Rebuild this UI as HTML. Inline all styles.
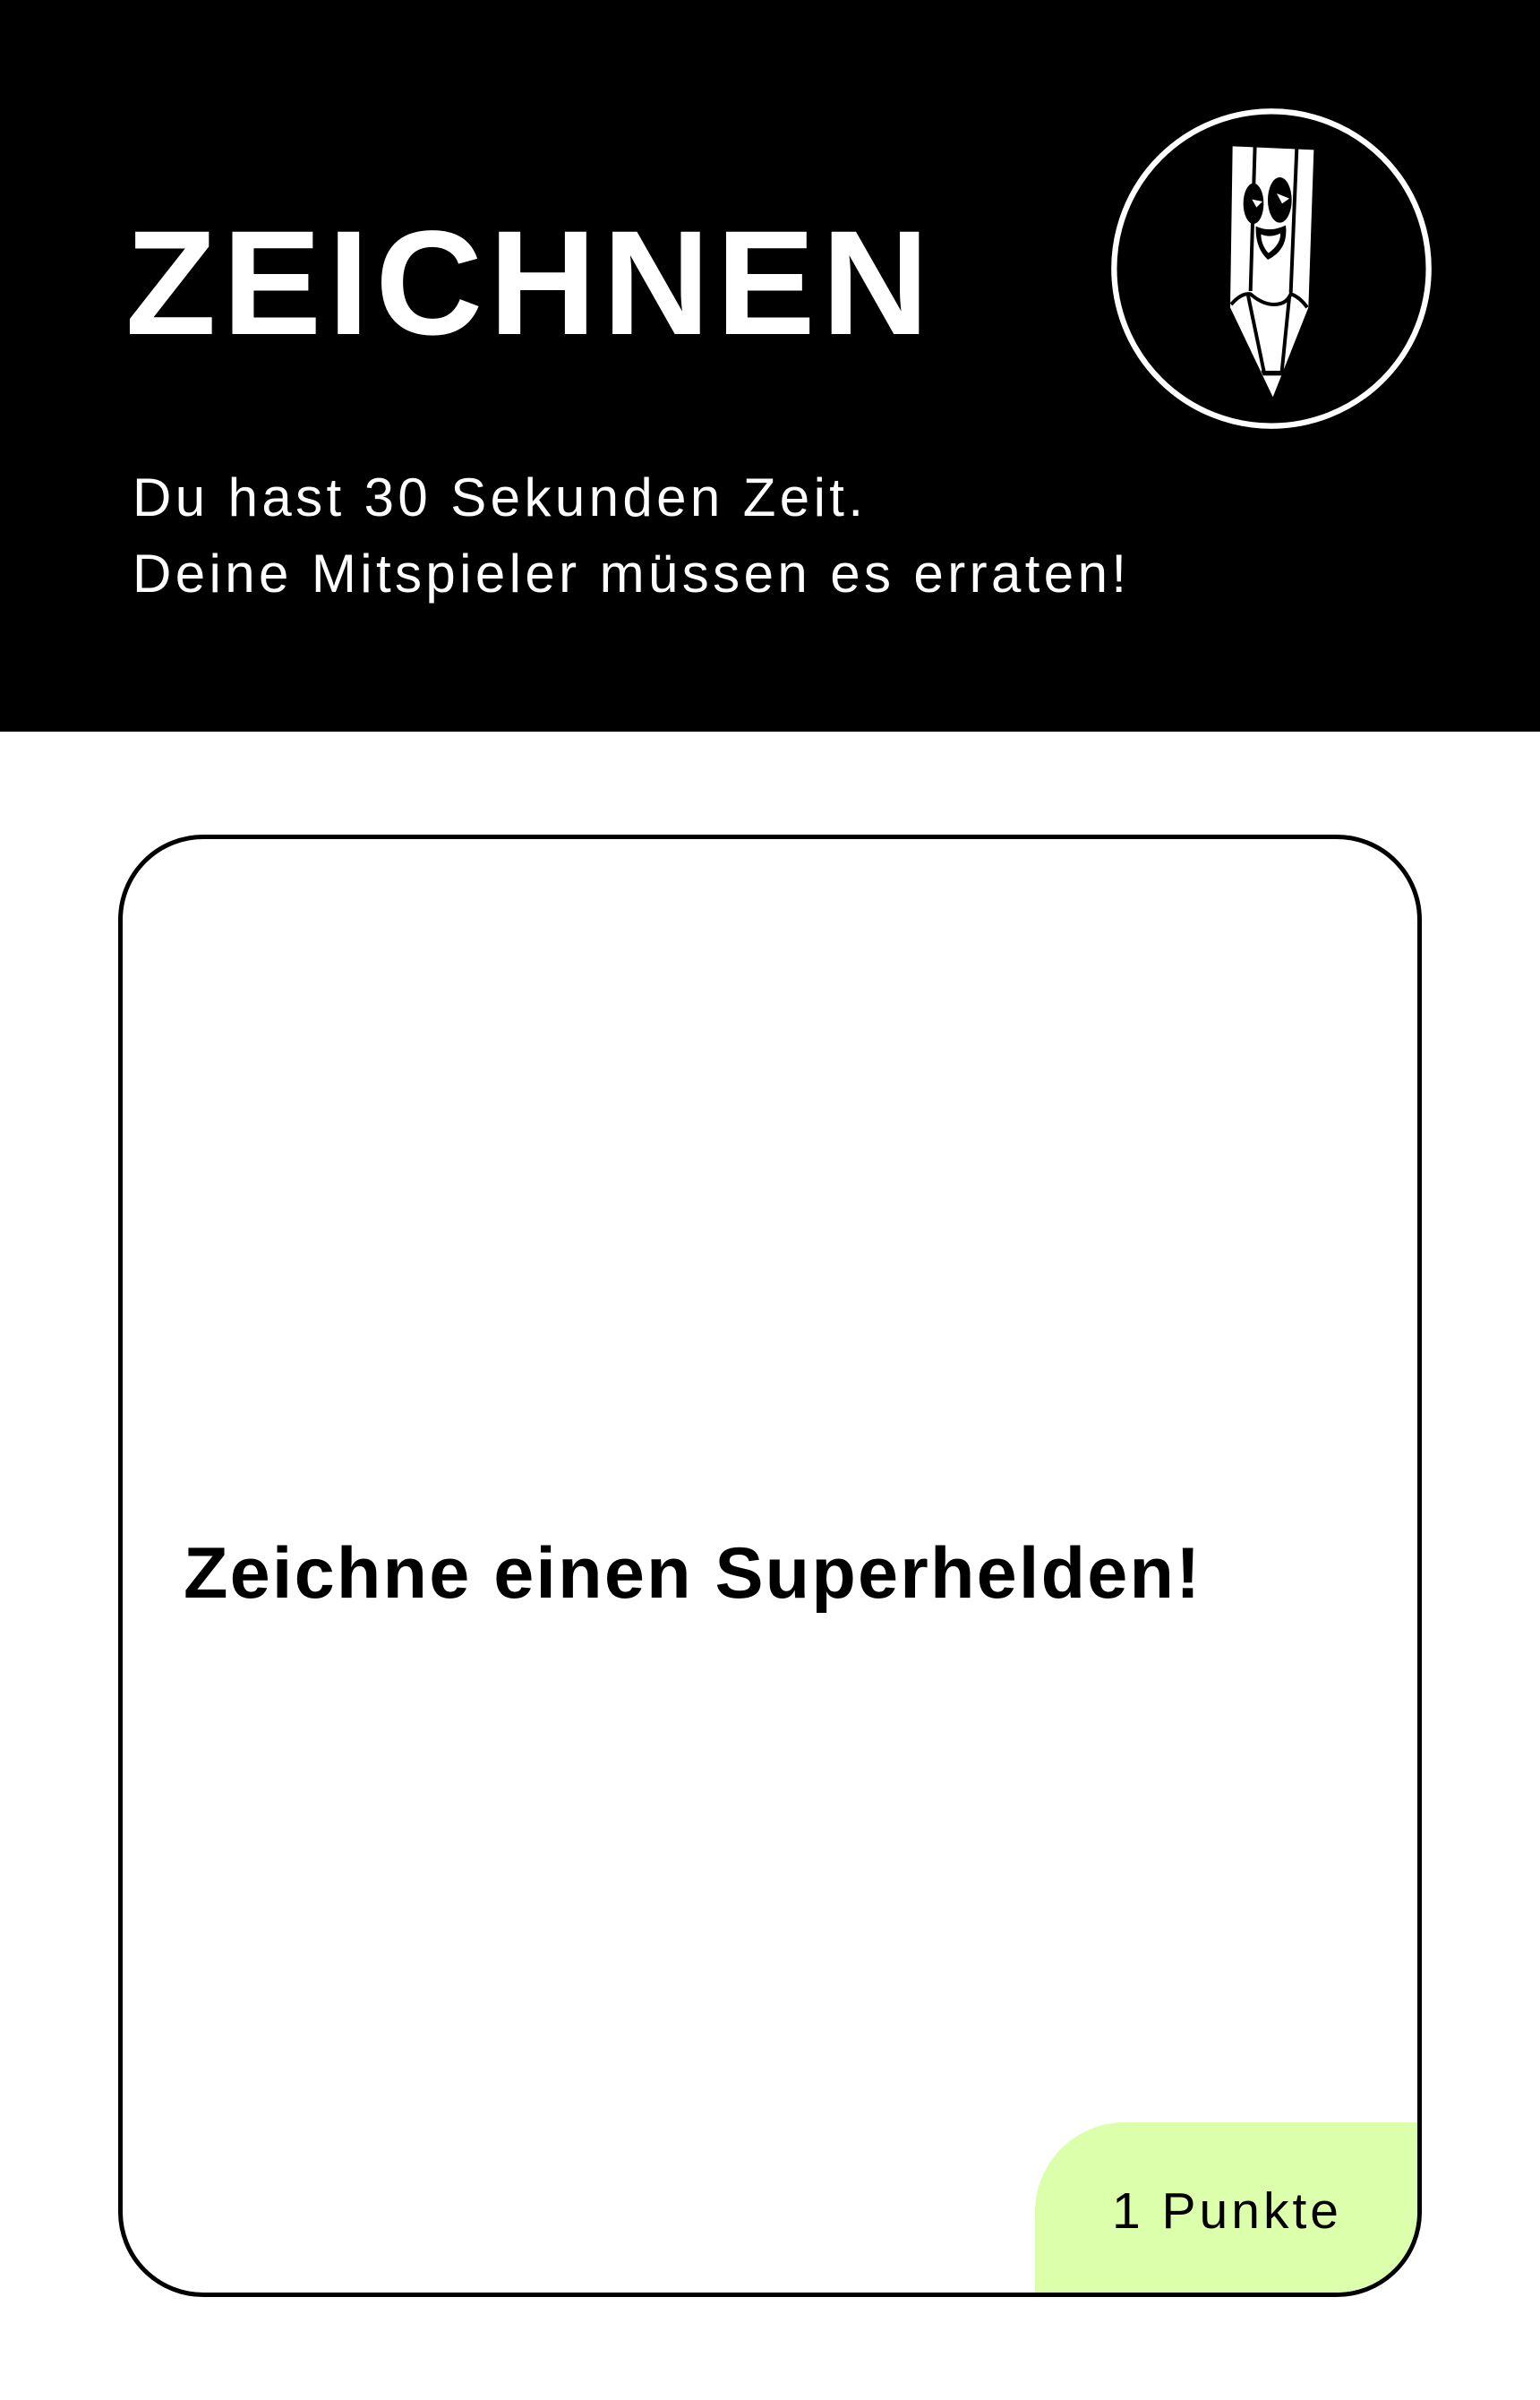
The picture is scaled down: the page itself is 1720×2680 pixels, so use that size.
<!DOCTYPE html>
<html><head><meta charset="utf-8"><style>
html,body{margin:0;padding:0;width:1720px;height:2680px;background:#fff;overflow:hidden;font-family:"Liberation Sans","DejaVu Sans",sans-serif;}
.hdr{position:absolute;left:0;top:0;width:1720px;height:817px;background:#000;}
.title{position:absolute;left:140px;top:234px;font-size:166px;font-weight:bold;color:#fff;letter-spacing:7px;line-height:1;white-space:nowrap;}
.sub{position:absolute;left:148px;top:513px;font-size:60px;line-height:85px;color:#fff;white-space:nowrap;letter-spacing:4.4px;}
.card{position:absolute;left:132px;top:932px;width:1446px;height:1623px;border:5px solid #000;border-radius:95px;overflow:hidden;background:#fff;}
.main{position:absolute;left:205px;top:1717px;font-size:81px;font-weight:bold;color:#000;line-height:1;white-space:nowrap;letter-spacing:2.2px;}
.badge{position:absolute;left:1019px;top:1433px;width:440px;height:200px;background:#dbffaa;border-top-left-radius:100px;}
.pts{position:absolute;left:1242px;top:2441px;font-size:57px;color:#000;line-height:1;white-space:nowrap;letter-spacing:4px;}
svg{position:absolute;}
</style></head><body>
<div class="hdr"></div>
<div class="title">ZEICHNEN</div>
<div class="sub">Du hast 30 Sekunden Zeit.<br>Deine Mitspieler müssen es erraten!</div>
<svg style="left:1230px;top:110px" width="380" height="380" viewBox="0 0 1140 1140">
<circle cx="570" cy="570" r="527" fill="none" stroke="#fff" stroke-width="19"/>
<path d="M440 160 L712 172 L694 700 L575 1000 L432 700 Z" fill="#fff"/>
<path d="M515 155 L500 645 M655 165 L635 650" stroke="#000" stroke-width="12" fill="none"/>
<path d="M435 690 Q470 650 500 655 Q540 690 580 690 Q620 690 635 655 Q665 665 690 700" stroke="#000" stroke-width="12" fill="none"/>
<path d="M492 660 L545 915 M630 665 L605 915" stroke="#000" stroke-width="12" fill="none"/>
<path d="M535 912 L612 912 L605 928 L542 928 Z" fill="#000"/>
<ellipse cx="510" cy="352" rx="34" ry="68" fill="#000"/>
<path d="M505 338 L540 345 L520 365 Z" fill="#fff"/>
<ellipse cx="598" cy="340" rx="40" ry="76" fill="#000"/>
<path d="M588 318 L630 335 L606 352 Z" fill="#fff"/>
<path d="M518 428 Q565 450 618 425 Q628 505 558 540 Q515 500 518 428 Z" fill="#000"/>
<path d="M535 455 Q567 468 600 452 Q602 488 560 518 Q536 492 535 455 Z" fill="#fff"/>
</svg>
<div class="card"><div class="badge"></div></div>
<div class="main">Zeichne einen Superhelden!</div>
<div class="pts">1 Punkte</div>
</body></html>
